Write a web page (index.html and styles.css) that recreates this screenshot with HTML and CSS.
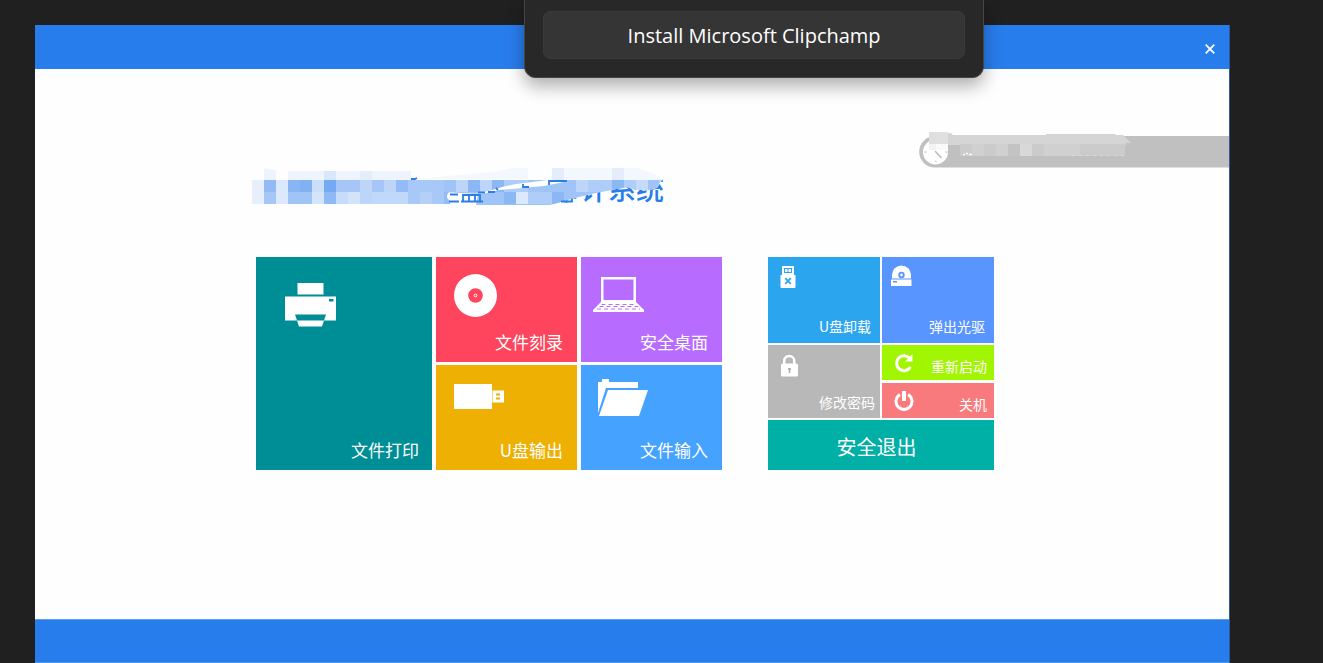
FILE: index.html
```html
<!DOCTYPE html>
<html lang="zh-CN">
<head>
<meta charset="utf-8">
<title>审计系统</title>
<link rel="stylesheet" href="styles.css">
</head>
<body>
<div class="window">
  <header class="titlebar">
    <button class="close" type="button" aria-label="关闭">
      <svg width="10" height="10" viewBox="0 0 10 10"><path d="M.7 .7 9.3 9.3M9.3 .7 .7 9.3"/></svg>
    </button>
  </header>
  <main class="content">
    <div class="clockbar">
      <svg width="310" height="37" viewBox="919 131 310 37" aria-hidden="true">
        <path fill="#c0c0c0" d="M1229 136H935a15.800 15.800 0 0 0 0 31.600h294z"/>
        <circle cx="935.500" cy="152" r="12.500" fill="#fff"/>
        <path d="M935 151l6.500 7" stroke="#bbb" stroke-width="1.500"/>
        <path d="M924.500 152h2M945.500 152h2M935 161.500h1.500" stroke="#ccc" stroke-width="1.500"/>
        <path fill="#d5d5d5" d="M948 133h3l2 2h93v-1h69l1 1h7l8 8h-5v2H948z"/>
        <path fill="#dedede" d="M929 132h7v12h-7z"/><path fill="#e0e0e0" d="M936 132h12v12h-12z"/>
        <path fill="#f3f3f3" d="M929 144h7v6h-7z"/><path fill="#fafafa" d="M936 144h12v6h-12z"/>
        <path fill="#cbcbcb" d="M960 144h165v12H960z"/>
        <path fill="#d0d0d0" d="M972 144h12v12h-12zM996 144h12v12h-12zM1044 144h36v12h-36z"/>
        <path fill="#c3c3c3" d="M1008 144h12v12h-12z"/><path fill="#d8d8d8" d="M1020 144h12v12h-12z"/>
        <path d="M963 154.500h2m1-1h2m1 1h3" stroke="#fff" stroke-width="1.500"/>
        <path d="M1072 155.500h54" stroke="#dadada" stroke-dasharray="3 4"/>
      </svg>
    </div>
    <div class="heading">
      <h1>盘安全审计系统</h1>
      <svg class="mosaic" width="412" height="37" viewBox="252 168 412 37" aria-hidden="true">
        <defs>
          <clipPath id="smear"><path d="M444 180h217l-4 8-10 2h-11l-9-3-27 5-25 6-25 7h-74l2-11-34-2z"/></clipPath>
        </defs>
        <path fill="#fefefe" d="M252 168h410v12l-5 8-10 2h-11l-9-3-27 5-25 6-25 7H252z"/>
        <path fill="#eef4fd" d="M264 168l4 1 8 1v10h-12zM288 171h123v9H288z"/>
        <path fill="#d9e7fb" d="M324 171h12v9h-12z"/><path fill="#e4eefb" d="M360 171h12v9h-12z"/>
        <path fill="#f3f8fe" d="M418 179l40-4 36-3 18-4h126l17 6 7 6z"/>
        <path fill="#e4eefb" d="M612 168h12v12h-12zM552 168h12v12h-12z"/>
        <path fill="#fdfeff" d="M528 168h24v12h-24z"/>
        <path fill="#e7effc" d="M252 180h12v24h-12z"/>
        <path fill="#92bbf6" d="M264 180h12v12h-12z"/><path fill="#a5c6f7" d="M264 192h12v12h-12z"/>
        <path fill="#dce8fb" d="M276 180h12v24h-12z"/>
        <path fill="#89b5f3" d="M288 180h12v12h-12z"/><path fill="#a0c4f6" d="M288 192h24v12h-24z"/>
        <path fill="#81b0f3" d="M300 180h12v12h-12z"/><path fill="#cbdff9" d="M312 180h12v12h-12z"/><path fill="#d4e4fb" d="M312 192h12v12h-12z"/>
        <path fill="#74a9f4" d="M324 180h12v12h-12z"/><path fill="#8fb9f5" d="M324 192h12v12h-12z"/>
        <path fill="#a5c6f6" d="M336 180h24v12h-24zM372 180h12v12h-12z"/>
        <path fill="#c7dcf9" d="M336 192h12v12h-12z"/><path fill="#d2e3fa" d="M348 192h12v12h-12z"/>
        <path fill="#bcd5f8" d="M360 180h12v24h-12zM384 180h12v12h-12z"/><path fill="#c0d8f9" d="M372 192h36v12h-36z"/>
        <path fill="#92bbf7" d="M396 180h12v12h-12z"/><path fill="#a8c9f7" d="M408 180h12v24h-12zM420 180h12v12h-12zM432 180h12v24h-12z"/>
        <path fill="#b4d0f8" d="M420 192h12v12h-12z"/><path fill="#92bbf7" d="M444 192h5l-2 3v3l3 3v3h-6z"/>
        <g clip-path="url(#smear)">
          <path fill="#a0c4f7" d="M444 180h220v25H444z"/>
          <path fill="#bcd5f8" d="M456 180h12v12h-12zM480 180h12v12h-12zM576 180h12v12h-12z"/>
          <path fill="#8bb7f5" d="M468 180h12v12h-12zM492 180h12v12h-12zM504 192h12v12h-12zM552 192h12v12h-12zM612 180h12v12h-12z"/>
          <path fill="#aecdf8" d="M504 180h24v12h-24zM528 192h24v12h-24zM588 180h24v12h-24zM624 180h12v12h-12z"/>
          <path fill="#dce8fb" d="M516 192h12v12h-12z"/><path fill="#c6dbfa" d="M636 180h12v12h-12z"/>
        </g>
        <path fill="#fff" d="M476 194l16-4 10-3 14-3 8-1 24-3h18l-2 2-20 4-22 2-22 2-18 4z"/>
        <g fill="none" stroke="#2b7de9" stroke-width="1.800">
          <path d="M411 179h4l2-1M450 194.500h8M449 201.500h10M461 201.500h22M463 201v-6h17v6M469 195v6M475 195v6M478 192.500h7M488 192h7M496 188l2 2M523 184v3h6M549 185v-4h18M561 201.500h11v-3"/>
        </g>
      </svg>
    </div>
    <div class="boards">
      <nav class="board main-board" aria-label="文件">
        <button type="button" class="tile print">
          <svg width="52" height="44" viewBox="0 0 52 44"><path fill-rule="evenodd" d="M12.500 0h26v11.500h-26zM0 13.500h51v24H39l2-6H10l2 6H0zM44 16v2.500h4.500V16zM12 37.500h27l-2 6H14z"/></svg>
          <span>文件打印</span>
        </button>
        <button type="button" class="tile burn">
          <svg width="56" height="48" viewBox="0 0 56 48"><path fill-rule="evenodd" d="M6 24.500a21.500 21.500 0 1 0 43 0a21.500 21.500 0 1 0-43 0zM20.200 24.500a7.300 7.300 0 1 1 14.600 0a7.300 7.300 0 1 1-14.600 0z"/><circle cx="27.500" cy="24.500" r="1.400" fill="none" stroke="#fff"/></svg>
          <span>文件刻录</span>
        </button>
        <button type="button" class="tile desktop">
          <svg width="56" height="48" viewBox="0 0 56 48"><path fill-rule="evenodd" d="M8 6h35v25H8zM10.500 8.500v20.500h30V8.500z"/><path d="M8 31h35l8 8v2H0v-2z"/><path d="M8.500 33.500h35M6.500 35.500h39M4 38h43" fill="none" stroke="#b86cff" stroke-width="1" stroke-dasharray="4 3"/></svg>
          <span>安全桌面</span>
        </button>
        <button type="button" class="tile output">
          <svg width="57" height="48" viewBox="0 0 57 48"><path fill-rule="evenodd" d="M6 5h38v25H6zM44.500 11.500h11.500v12H44.500zM48 14.500v2h4v-2zM48 18.500v2h4v-2z"/></svg>
          <span>U盘输出</span>
        </button>
        <button type="button" class="tile input">
          <svg width="56" height="48" viewBox="0 0 56 48"><path d="M5 3h4V0h7v3h29v6H13L5 34zM15 11h40l-9 26H6z"/></svg>
          <span>文件输入</span>
        </button>
      </nav>
      <nav class="board side-board" aria-label="系统">
        <button type="button" class="tile small unload">
          <svg width="24" height="24" viewBox="0 0 24 24"><path fill-rule="evenodd" d="M3 1h12v9h1.500v12q0 1-1 1h-13q-1 0-1-1V10H3zM5 3v5h8V3z"/><path d="M6 4h2.500v3H6zM9.500 4H12v3H9.500z"/><path d="M6.200 13.200l5.600 5.600M11.800 13.200l-5.600 5.600" stroke="#2ca5ef" stroke-width="1.800"/></svg>
          <span>U盘卸载</span>
        </button>
        <button type="button" class="tile small eject">
          <svg width="24" height="24" viewBox="0 0 24 24"><path d="M1 13.500V10a9.500 9.500 0 0 1 19 0v3.500z"/><path fill-rule="evenodd" d="M0 14.500h20.500V21H0zM2 16v1.500h4V16z"/><circle cx="10.500" cy="10" r="2.300" fill="none" stroke="#5995ff" stroke-width="1.800"/></svg>
          <span>弹出光驱</span>
        </button>
        <button type="button" class="tile small password">
          <svg width="24" height="24" viewBox="0 0 24 24"><path d="M5.200 10V7a5 5 0 0 1 10 0v3" fill="none" stroke="#fff" stroke-width="2.500"/><rect x="2" y="9.500" width="17" height="13" rx="1.500"/><path d="M10.500 14v5M9 15h3" stroke="#aaa" stroke-width="1.500"/></svg>
          <span>修改密码</span>
        </button>
        <div class="power-pair">
          <button type="button" class="tile row restart">
            <svg width="20" height="20" viewBox="0 0 20 20"><path d="M16.500 14a7.500 7.500 0 1 1-1-9" fill="none" stroke="#fff" stroke-width="3"/><path d="M18.500 1v7.500H11z"/></svg>
            <span>重新启动</span>
          </button>
          <button type="button" class="tile row shutdown">
            <svg width="20" height="20" viewBox="0 0 20 20"><path d="M6 3.500a8 8 0 1 0 8 0" fill="none" stroke="#fff" stroke-width="3"/><path d="M8 0h4v10H8z"/></svg>
            <span>关机</span>
          </button>
        </div>
        <button type="button" class="tile exit"><span>安全退出</span></button>
      </nav>
    </div>
  </main>
  <footer class="statusbar"></footer>
</div>
<div class="popup">
  <button type="button" class="install">Install Microsoft Clipchamp</button>
</div>
</body>
</html>
```

FILE: styles.css
```css
* {
  box-sizing: border-box;
}

body {
  margin: 0;
  min-height: 100vh;
  display: flex;
  padding: 25px 93px 0 35px;
  background: #202020;
  font-family: "Noto Sans CJK SC", sans-serif;
}

button {
  border: 0;
  padding: 0;
  font-family: inherit;
  color: #fff;
  cursor: pointer;
}

svg {
  display: block;
}

.window {
  flex: 1;
  display: flex;
  flex-direction: column;
  background: #fefefe;
  border-right: 1px solid #285a9c;
}

.titlebar {
  height: 44px;
  display: flex;
  align-items: center;
  justify-content: flex-end;
  padding: 3px 9px 0 0;
  background: #287dec;
}

.close {
  padding: 5px;
  background: none;
}

.close path {
  stroke: #fff;
  stroke-width: 1.8;
}

.content {
  flex: 1;
  padding-top: 62px;
}

.clockbar {
  display: flex;
  justify-content: flex-end;
}

.heading {
  position: relative;
  width: 412px;
  height: 36px;
  margin-left: 217px;
}

.heading h1 {
  margin: 0;
  text-align: right;
  font-size: 28px;
  line-height: 40px;
  font-weight: 500;
  color: #287dec;
}

.mosaic {
  position: absolute;
  top: 0;
  left: 0;
}

.boards {
  display: flex;
  gap: 46px;
  margin: 53px 0 40px 221px;
}

.board {
  display: grid;
}

.main-board {
  grid-template-columns: 176px 141px 141px;
  grid-template-rows: 105px 105px;
  gap: 3px 4px;
}

.side-board {
  grid-template-columns: 112px 112px;
  grid-template-rows: 86px 73px 50px;
  gap: 2px;
}

.tile {
  display: flex;
  flex-direction: column;
  align-items: flex-start;
  justify-content: space-between;
  padding: 14px 14px 8px 12px;
  font-size: 17px;
  line-height: 24px;
}

.tile svg {
  fill: #fff;
}

.tile span {
  align-self: flex-end;
}

.print {
  grid-row: span 2;
  padding: 26px 13px 8px 29px;
  background: #008e96;
}

.burn { background: #ff445d; }
.desktop { background: #b86cff; }
.output { background: #edb003; }
.input { background: #46a2ff; }

.small {
  padding: 8px 9px 7px 11px;
  font-size: 14px;
  line-height: 20px;
}

.unload { background: #2ca5ef; }
.eject { background: #5995ff; }

.eject {
  padding-left: 9px;
}

.password {
  padding: 9px 5px 6px 11px;
  background: #b8b8b8;
}

.power-pair {
  display: grid;
  grid-template-rows: 1fr 1fr;
  gap: 3px;
}

.row {
  flex-direction: row;
  align-items: center;
  padding: 0 7px 0 12px;
  font-size: 14px;
  line-height: 20px;
}

.row span {
  align-self: center;
  padding-top: 6px;
}

.restart { background: #a2f500; }
.shutdown { background: #f87a7c; }

.exit {
  grid-column: span 2;
  align-items: center;
  justify-content: center;
  padding: 3px 9px 0 0;
  background: #00afa5;
  font-size: 20px;
  line-height: 28px;
}

.exit span {
  align-self: center;
}

.statusbar {
  height: 44px;
  background: #287dec;
  border-top: 1px solid #5b9df1;
  border-bottom: 1px solid #4a9af0;
}

.popup {
  position: absolute;
  top: 0;
  left: 57%;
  transform: translateX(-50%);
  padding: 11px 18px 18px;
  background: #282828;
  border: 1px solid #454545;
  border-top: 0;
  border-radius: 0 0 12px 12px;
  box-shadow: 0 8px 18px rgba(0, 0, 0, 0.32);
}

.install {
  width: 422px;
  height: 48px;
  border: 1px solid #3a3a3a;
  border-radius: 7px;
  background: #353535;
  font-family: "Open Sans", "Noto Sans", sans-serif;
  font-size: 20px;
}
```
